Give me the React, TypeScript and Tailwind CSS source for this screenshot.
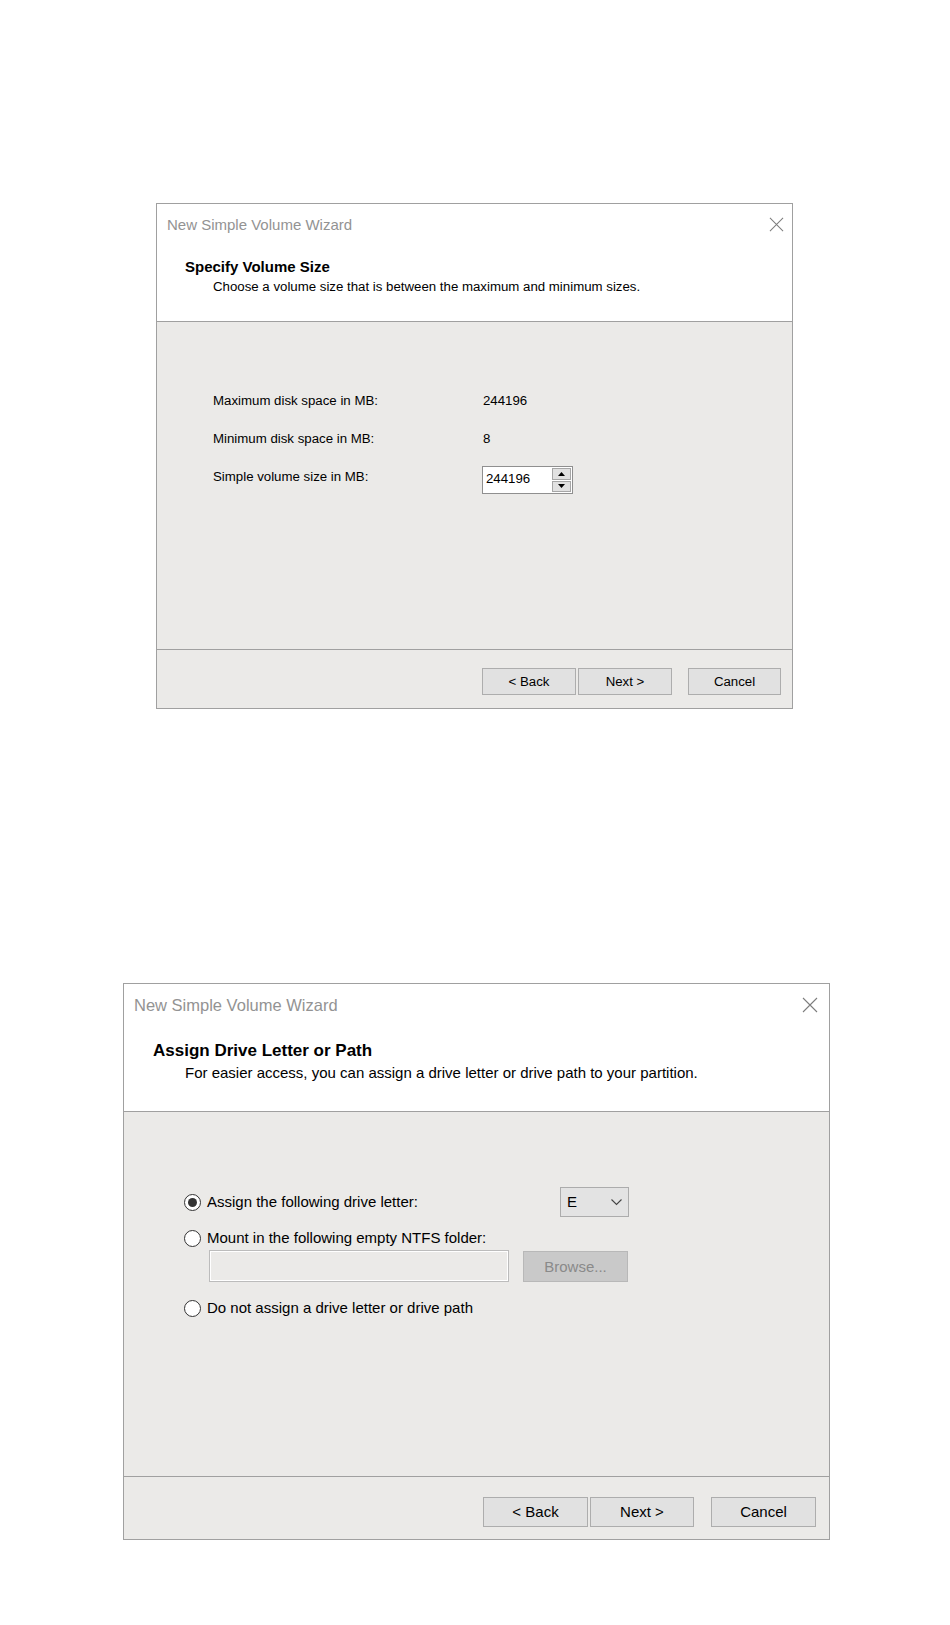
import type { FC, ReactNode } from 'react';

const CloseIcon: FC<{ size: number }> = ({ size }) => (
  <svg width={size} height={size} viewBox="0 0 16 16" className="shrink-0">
    <path d="M1 1L15 15M15 1L1 15" stroke="#7d7d7d" strokeWidth="1.1" fill="none" />
  </svg>
);

const WinButton: FC<{ className: string; children: ReactNode }> = ({ className, children }) => (
  <button
    type="button"
    className={`flex items-center justify-center border border-[#adadad] bg-[#e1e1e1] text-black ${className}`}
  >
    {children}
  </button>
);

const Radio: FC<{ checked?: boolean }> = ({ checked }) => (
  <span className="flex h-[17px] w-[17px] shrink-0 items-center justify-center rounded-full border-[1.5px] border-[#333333] bg-white">
    {checked && <span className="h-[9px] w-[9px] rounded-full bg-[#333333]" />}
  </span>
);

const SpinArrow: FC<{ up?: boolean }> = ({ up }) => (
  <svg width="7" height="4" viewBox="0 0 7 4">
    <path d={up ? 'M0 4L3.5 0L7 4Z' : 'M0 0L7 0L3.5 4Z'} fill="#000" />
  </svg>
);

const VolumeSizeDialog: FC = () => (
  <div className="ml-[156px] mt-[203px] flex h-[506px] w-[637px] flex-col border border-[#a0a0a0] text-[13.25px] leading-[20px] text-black">
    {/* header */}
    <div className="h-[118px] border-b border-[#a0a0a0] bg-white">
      <div className="flex items-start justify-between pl-[10px] pr-[8px] pt-[11px]">
        <span className="text-[15px] leading-[20px] text-[#939393]">New Simple Volume Wizard</span>
        <span className="mt-[2px]">
          <CloseIcon size={15} />
        </span>
      </div>
      <div className="pl-[28px] pt-[22px] text-[15px] font-bold leading-[20px]">Specify Volume Size</div>
      <div className="pl-[56px]">Choose a volume size that is between the maximum and minimum sizes.</div>
    </div>

    {/* body */}
    <div className="h-[328px] border-b border-[#a0a0a0] bg-[#ebeae8] pl-[56px] pt-[69px]">
      <div className="flex h-[20px] items-center">
        <span className="w-[269px]">Maximum disk space in MB:</span>
        <span className="pl-[1px]">244196</span>
      </div>
      <div className="mt-[18px] flex h-[20px] items-center">
        <span className="w-[269px]">Minimum disk space in MB:</span>
        <span className="pl-[1px]">8</span>
      </div>
      <div className="mt-[18px] flex items-start">
        <span className="w-[269px]">Simple volume size in MB:</span>
        <div className="-mt-[1px] flex h-[28px] w-[91px] items-stretch border border-[#8f8f8f] bg-white">
          <span className="flex-1 pl-[3px] pt-[2px]">244196</span>
          <div className="flex w-[20px] flex-col gap-[1px] py-[1px] pr-[1px]">
            <span className="flex flex-1 items-center justify-center border border-[#a6a6a6] bg-[#e1e1e1]">
              <SpinArrow up />
            </span>
            <span className="flex flex-1 items-center justify-center border border-[#a6a6a6] bg-[#e1e1e1]">
              <SpinArrow />
            </span>
          </div>
        </div>
      </div>
    </div>

    {/* footer */}
    <div className="flex flex-1 items-start justify-end bg-[#ebeae8] pr-[11px] pt-[18px]">
      <WinButton className="h-[27px] w-[94px]">&lt; Back</WinButton>
      <WinButton className="ml-[2px] h-[27px] w-[94px]">Next &gt;</WinButton>
      <WinButton className="ml-[16px] h-[27px] w-[93px]">Cancel</WinButton>
    </div>
  </div>
);

const DriveLetterDialog: FC = () => (
  <div className="ml-[123px] mt-[274px] flex h-[557px] w-[707px] flex-col border border-[#a0a0a0] text-[15px] leading-[22px] text-black">
    {/* header */}
    <div className="h-[128px] border-b border-[#a0a0a0] bg-white">
      <div className="flex items-start justify-between pl-[10px] pr-[11px] pt-[10px]">
        <span className="text-[16.5px] leading-[22px] text-[#939393]">New Simple Volume Wizard</span>
        <span className="mt-[3px]">
          <CloseIcon size={16} />
        </span>
      </div>
      <div className="pl-[29px] pt-[24px] text-[17px] font-bold leading-[22px]">Assign Drive Letter or Path</div>
      <div className="pl-[61px]">For easier access, you can assign a drive letter or drive path to your partition.</div>
    </div>

    {/* body */}
    <div className="h-[365px] border-b border-[#a0a0a0] bg-[#ebeae8] pl-[60px] pt-[75px]">
      <div className="flex h-[30px] items-center">
        <Radio checked />
        <span className="ml-[6px] w-[353px]">Assign the following drive letter:</span>
        <div className="flex h-[30px] w-[69px] items-center justify-between border border-[#acacac] bg-[#e3e3e3] pl-[6px] pr-[6px]">
          <span>E</span>
          <svg width="11" height="7" viewBox="0 0 11 7">
            <path d="M0.5 0.5L5.5 5.5L10.5 0.5" stroke="#444" strokeWidth="1.1" fill="none" />
          </svg>
        </div>
      </div>
      <div className="mt-[10px] flex h-[22px] items-center">
        <Radio />
        <span className="ml-[6px]">Mount in the following empty NTFS folder:</span>
      </div>
      <div className="ml-[25px] mt-[1px] flex items-start">
        <div className="h-[32px] w-[300px] border border-[#bcbcbc] shadow-[inset_0_0_0_1px_#ffffff]" />
        <div className="ml-[14px] mt-[1px] flex h-[31px] w-[105px] items-center justify-center border border-[#b8b8b8] bg-[#c9c9c9] text-[#8a8a8a]">
          Browse...
        </div>
      </div>
      <div className="mt-[15px] flex h-[22px] items-center">
        <Radio />
        <span className="ml-[6px]">Do not assign a drive letter or drive path</span>
      </div>
    </div>

    {/* footer */}
    <div className="flex flex-1 items-start justify-end bg-[#ebeae8] pr-[13px] pt-[20px]">
      <WinButton className="h-[30px] w-[105px]">&lt; Back</WinButton>
      <WinButton className="ml-[2px] h-[30px] w-[104px]">Next &gt;</WinButton>
      <WinButton className="ml-[17px] h-[30px] w-[105px]">Cancel</WinButton>
    </div>
  </div>
);

export default function App() {
  return (
    <div className="flex h-[1625px] w-[950px] flex-col bg-white font-['Liberation_Sans',Arial,sans-serif]">
      <VolumeSizeDialog />
      <DriveLetterDialog />
    </div>
  );
}
